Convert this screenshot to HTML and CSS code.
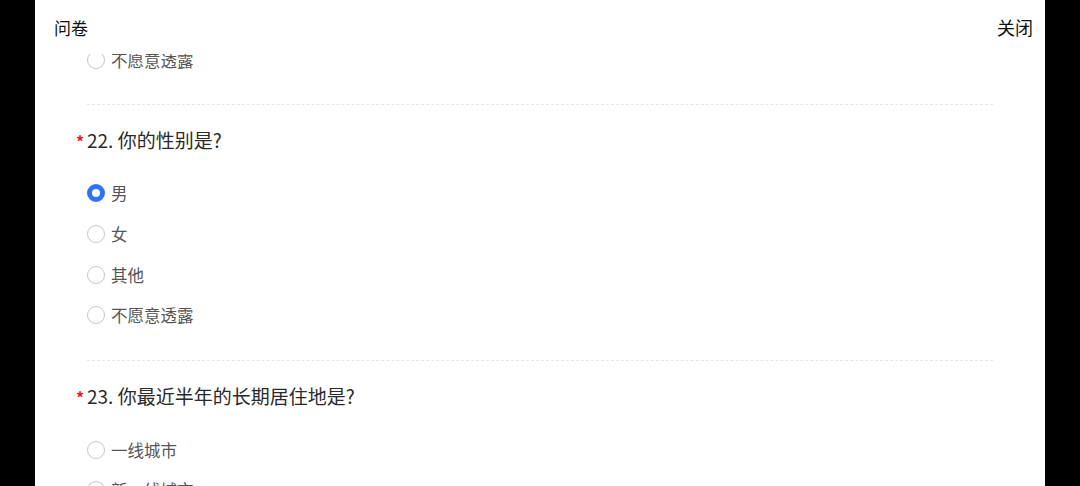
FILE: index.html
```html
<!DOCTYPE html>
<html lang="zh-CN">
<head>
<meta charset="utf-8">
<title>问卷</title>
<link rel="stylesheet" href="styles.css">
</head>
<body>
<div class="panel">
  <header class="header">
    <span class="header-title">问卷</span>
    <span class="header-close">关闭</span>
  </header>
  <div class="scroll">
    <div class="content">
      <section class="question question-tail">
        <div class="options">
          <label class="option"><span class="radio"></span><span class="option-text">不愿意透露</span></label>
        </div>
      </section>
      <section class="question">
        <div class="q-title"><span class="required">*</span>22. 你的性别是?</div>
        <div class="options">
          <label class="option"><span class="radio checked"></span><span class="option-text">男</span></label>
          <label class="option"><span class="radio"></span><span class="option-text">女</span></label>
          <label class="option"><span class="radio"></span><span class="option-text">其他</span></label>
          <label class="option"><span class="radio"></span><span class="option-text">不愿意透露</span></label>
        </div>
      </section>
      <section class="question">
        <div class="q-title"><span class="required">*</span>23. 你最近半年的长期居住地是?</div>
        <div class="options">
          <label class="option"><span class="radio"></span><span class="option-text">一线城市</span></label>
          <label class="option"><span class="radio"></span><span class="option-text">新一线城市</span></label>
          <label class="option"><span class="radio"></span><span class="option-text">二线城市</span></label>
        </div>
      </section>
    </div>
  </div>
</div>
</body>
</html>
```

FILE: styles.css
```css
* { box-sizing: border-box; }
html, body {
  margin: 0;
  padding: 0;
  background: #000;
  height: 486px;
  overflow: hidden;
}
body {
  font-family: "Noto Sans CJK SC", "Noto Sans", sans-serif;
}
.panel {
  width: 1010px;
  height: 486px;
  margin-left: 35px;
  background: #fff;
  display: flex;
  flex-direction: column;
  overflow: hidden;
}
.header {
  flex: 0 0 54px;
  height: 54px;
  display: flex;
  align-items: center;
  justify-content: space-between;
  padding: 0 12px 0 19px;
  background: #fff;
  color: #111;
  font-size: 17px;
  position: relative;
  z-index: 2;
}
.header-close { font-size: 18px; }
.scroll {
  flex: 1;
  overflow: hidden;
}
.content {
  margin-top: -14.25px;
  padding: 0 52px;
}
.question {
  padding: 22.5px 0 24.5px;
  border-bottom: 1px dashed #e6e6e6;
}
.question-tail { padding-top: 0; padding-bottom: 23.5px; }
.q-title {
  height: 26px;
  line-height: 26px;
  font-size: 19px;
  color: #2a2a2a;
  margin-left: -11px;
  margin-bottom: 19.75px;
  display: flex;
  align-items: center;
}
.required {
  color: #e02020;
  font-size: 16px;
  font-weight: 700;
  width: 11px;
  display: inline-block;
  line-height: 1;
  position: relative;
  top: 1px;
}
.options {
  display: flex;
  flex-direction: column;
}
.option {
  height: 40.6px;
  display: flex;
  align-items: center;
  gap: 6px;
}
.radio {
  width: 18px;
  height: 18px;
  border-radius: 50%;
  border: 1px solid #c6c6c6;
  background: #fff;
  flex: 0 0 18px;
}
.radio.checked {
  border: 5px solid #2f73f2;
}
.option-text {
  font-size: 16.5px;
  color: #555;
  line-height: 22px;
}
```
